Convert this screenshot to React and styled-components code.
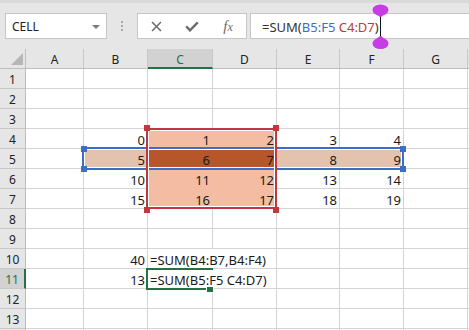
import React from 'react';
import styled, { createGlobalStyle } from 'styled-components';

const GlobalStyle = createGlobalStyle`
  html, body { margin: 0; padding: 0; background: #fff; overflow: hidden; }
  body { font-family: "Noto Sans", "Open Sans", sans-serif; }
`;

const Page = styled.div`
  width: 469px;
  height: 330px;
  overflow: hidden;
  display: flex;
  flex-direction: column;
  background: #fff;
`;

const Toolbar = styled.div`
  height: 49px;
  flex: none;
  box-sizing: border-box;
  background: #e6e6e6;
  border-top: 3px solid #dadada;
  padding: 10px 0 0 5px;
  display: flex;
  align-items: flex-start;
`;

const NameBox = styled.div`
  width: 102px;
  height: 26px;
  box-sizing: border-box;
  border: 1px solid #c6c6c6;
  background: #fff;
  display: flex;
  align-items: center;
  justify-content: space-between;
  padding: 1px 6px 0 6px;
  font-size: 12px;
  color: #222;
`;

const DropArrow = styled.span`
  width: 0;
  height: 0;
  border-left: 4px solid transparent;
  border-right: 4px solid transparent;
  border-top: 4px solid #7b7b7b;
`;

const Grip = styled.div`
  width: 30px;
  height: 26px;
  display: flex;
  flex-direction: column;
  align-items: center;
  justify-content: center;
  gap: 2px;
`;

const GripDot = styled.span`
  width: 2px;
  height: 2px;
  background: #a8a8a8;
`;

const ButtonBox = styled.div`
  width: 110px;
  height: 26px;
  box-sizing: border-box;
  border: 1px solid #c6c6c6;
  background: #fff;
  display: flex;
`;

const IconSlot = styled.div`
  width: 36px;
  height: 100%;
  display: flex;
  align-items: center;
  justify-content: center;
  color: #6b6b6b;
`;

const Fx = styled.span`
  font-family: "Liberation Serif", "DejaVu Serif", serif;
  font-style: italic;
  font-size: 15px;
  color: #6b6b6b;
  line-height: 1;
  & > small { font-size: 12px; }
`;

const FormulaInput = styled.div`
  flex: 1;
  margin-left: 3px;
  margin-right: -2px;
  height: 26px;
  box-sizing: border-box;
  border: 1px solid #c6c6c6;
  background: #fff;
  display: flex;
  align-items: center;
  padding: 2px 0 0 11px;
  font-size: 13px;
  color: #333;
  white-space: nowrap;
`;

const Ref = styled.span`
  color: ${p => p.$color};
`;

const Caret = styled.span`
  position: relative;
  width: 1px;
  height: 20px;
  margin-left: 1px;
  background: #111;
  flex: none;
`;

const HandleSvg = styled.svg`
  position: absolute;
  left: -9px;
  ${p => (p.$top ? 'top: -13px;' : 'top: 19px;')}
  overflow: visible;
`;

const Sheet = styled.div`
  flex: 1;
  display: grid;
  grid-template-columns: 26px 58px 64px 65px 64px 63px 64px 64px 1fr;
  grid-template-rows: repeat(15, 20px);
  font-family: "Noto Sans", "Open Sans", sans-serif;
`;

const Corner = styled.div`
  grid-row: 1;
  grid-column: 1;
  box-sizing: border-box;
  background: #e6e6e6;
  border-right: 1px solid #bdbdbd;
  border-bottom: 1px solid #bdbdbd;
  display: flex;
  align-items: flex-end;
  justify-content: flex-end;
  padding: 0 2px 3px 0;
`;

const CornerTriangle = styled.span`
  width: 0;
  height: 0;
  border-left: 12px solid transparent;
  border-bottom: 12px solid #b5b5b5;
`;

const ColHead = styled.div`
  grid-row: 1;
  grid-column: ${p => p.$c};
  box-sizing: border-box;
  background: ${p => (p.$sel ? '#d2d2d2' : '#e6e6e6')};
  border-right: 1px solid #c8c8c8;
  border-bottom: ${p => (p.$sel ? '2px solid #217346' : '1px solid #bdbdbd')};
  display: flex;
  align-items: center;
  justify-content: center;
  padding-top: 2px;
  font-size: 12px;
  color: ${p => (p.$sel ? '#217346' : '#222')};
`;

const RowHead = styled.div`
  grid-row: ${p => p.$r};
  grid-column: 1;
  box-sizing: border-box;
  background: ${p => (p.$sel ? '#d2d2d2' : '#e6e6e6')};
  border-right: ${p => (p.$sel ? '2px solid #217346' : '1px solid #bdbdbd')};
  border-bottom: 1px solid #c8c8c8;
  display: flex;
  align-items: center;
  justify-content: center;
  padding-top: 2px;
  font-size: 12px;
  color: ${p => (p.$sel ? '#217346' : '#222')};
`;

const Cell = styled.div`
  grid-row: ${p => p.$r};
  grid-column: ${p => p.$c};
  min-width: 0;
  box-sizing: border-box;
  background: ${p => p.$fill || 'transparent'};
  border-right: 1px solid ${p => (p.$open ? 'transparent' : p.$fill || '#d4d4d4')};
  border-bottom: 1px solid ${p => p.$fill || '#d4d4d4'};
  display: flex;
  align-items: flex-end;
  justify-content: ${p => (p.$left ? 'flex-start' : 'flex-end')};
  padding: 0 2px;
  font-size: 13px;
  line-height: 16px;
  color: #1a1a1a;
  white-space: nowrap;
`;

const RangeBox = styled.div`
  position: relative;
  grid-row: ${p => p.$rows};
  grid-column: ${p => p.$cols};
  margin: ${p => p.$margin};
  border: 2px solid ${p => p.$color};
  box-shadow: inset 0 0 0 1px #fff;
  pointer-events: none;
`;

const ActiveBox = styled.div`
  position: relative;
  grid-row: 12;
  grid-column: 4;
  margin: -1px 0 -1px -2px;
  border: 2px solid #217346;
  border-right: none;
  pointer-events: none;
`;

const Handle = styled.span`
  position: absolute;
  width: 6px;
  height: 6px;
  background: ${p => p.$color};
  ${p => `${p.$v}: ${p.$dv}px; ${p.$h}: ${p.$dh}px;`}
`;

const FillHandle = styled.span`
  position: absolute;
  width: 6px;
  height: 5px;
  right: 0;
  bottom: -4px;
  background: #217346;
  box-shadow: 0 0 0 1px #fff;
`;

const SALMON = '#f4bca2';
const TAN = '#e4c3ae';
const DARK = '#b7562a';
const BLUE = '#3b6ec6';
const RED = '#c2373d';

const letters = ['A', 'B', 'C', 'D', 'E', 'F', 'G'];

function cellData(row, col) {
  const letterIdx = col - 2;
  if (row >= 4 && row <= 7 && letterIdx >= 1 && letterIdx <= 5) {
    const v = (row - 4) * 5 + (letterIdx - 1);
    let fill;
    if (row === 5) {
      fill = letterIdx === 2 || letterIdx === 3 ? DARK : TAN;
    } else if (letterIdx === 2 || letterIdx === 3) {
      fill = SALMON;
    }
    return { text: String(v), fill };
  }
  if (row === 10 && letterIdx === 1) return { text: '40' };
  if (row === 11 && letterIdx === 1) return { text: '13' };
  if (row === 10 && letterIdx === 2) return { text: '=SUM(B4:B7,B4:F4)', left: true, open: true };
  if (row === 11 && letterIdx === 2) return { text: '=SUM(B5:F5 C4:D7)', left: true, open: true };
  return { text: '' };
}

function Handles({ color, l, r, t, b }) {
  return (
    <>
      <Handle $color={color} $v="top" $dv={t} $h="left" $dh={l} />
      <Handle $color={color} $v="top" $dv={t} $h="right" $dh={r} />
      <Handle $color={color} $v="bottom" $dv={b} $h="left" $dh={l} />
      <Handle $color={color} $v="bottom" $dv={b} $h="right" $dh={r} />
    </>
  );
}

const PURPLE = '#c83ce8';

export default function App() {
  const rows = [];
  for (let r = 1; r <= 14; r++) {
    const gr = r + 1;
    rows.push(
      <RowHead key={`h${r}`} $r={gr} $sel={r === 11}>
        {r <= 13 ? r : ''}
      </RowHead>
    );
    for (let c = 2; c <= 9; c++) {
      const d = cellData(r, c);
      rows.push(
        <Cell key={`c${r}-${c}`} $r={gr} $c={c} $fill={d.fill} $left={d.left} $open={d.open}>
          {d.text}
        </Cell>
      );
    }
  }

  return (
    <Page>
      <GlobalStyle />
      <Toolbar>
        <NameBox>
          <span>CELL</span>
          <DropArrow />
        </NameBox>
        <Grip>
          <GripDot />
          <GripDot />
          <GripDot />
        </Grip>
        <ButtonBox>
          <IconSlot>
            <svg width="11" height="11" viewBox="0 0 11 11">
              <path d="M1 1 L10 10 M10 1 L1 10" stroke="currentColor" strokeWidth="1.5" fill="none" />
            </svg>
          </IconSlot>
          <IconSlot>
            <svg width="14" height="11" viewBox="0 0 14 11">
              <path d="M1.2 5.4 L5 9.4 L12.8 1.4" stroke="currentColor" strokeWidth="2.3" fill="none" />
            </svg>
          </IconSlot>
          <IconSlot>
            <Fx>
              f<small>x</small>
            </Fx>
          </IconSlot>
        </ButtonBox>
        <FormulaInput>
          <span>
            =SUM(<Ref $color={BLUE}>B5:F5</Ref>
            <Ref $color={RED}> C4:D7</Ref>)
          </span>
          <Caret>
            <HandleSvg $top width="18" height="13" viewBox="0 0 18 13">
              <ellipse cx="9.5" cy="6" rx="8" ry="5.5" fill={PURPLE} />
              <path d="M4 9 L15 9 L10 13 L9 13 Z" fill={PURPLE} />
            </HandleSvg>
            <HandleSvg width="18" height="14" viewBox="0 0 18 14">
              <path d="M9 0 L10 0 L15 4 L4 4 Z" fill={PURPLE} />
              <ellipse cx="9.5" cy="7.5" rx="8" ry="5.5" fill={PURPLE} />
            </HandleSvg>
          </Caret>
        </FormulaInput>
      </Toolbar>
      <Sheet>
        <Corner>
          <CornerTriangle />
        </Corner>
        {letters.map((l, i) => (
          <ColHead key={l} $c={i + 2} $sel={l === 'C'}>
            {l}
          </ColHead>
        ))}
        <ColHead $c={9} />
        {rows}
        <RangeBox $rows="6" $cols="3 / 8" $margin="-2px 0 -1px -2px" $color={BLUE}>
          <Handles color={BLUE} l={-3} r={-4} t={-3} b={-4} />
        </RangeBox>
        <RangeBox $rows="5 / 9" $cols="4 / 6" $margin="-1px 0 0 -2px" $color={RED}>
          <Handles color={RED} l={-4} r={-4} t={-5} b={-6} />
        </RangeBox>
        <ActiveBox>
          <FillHandle />
        </ActiveBox>
      </Sheet>
    </Page>
  );
}
